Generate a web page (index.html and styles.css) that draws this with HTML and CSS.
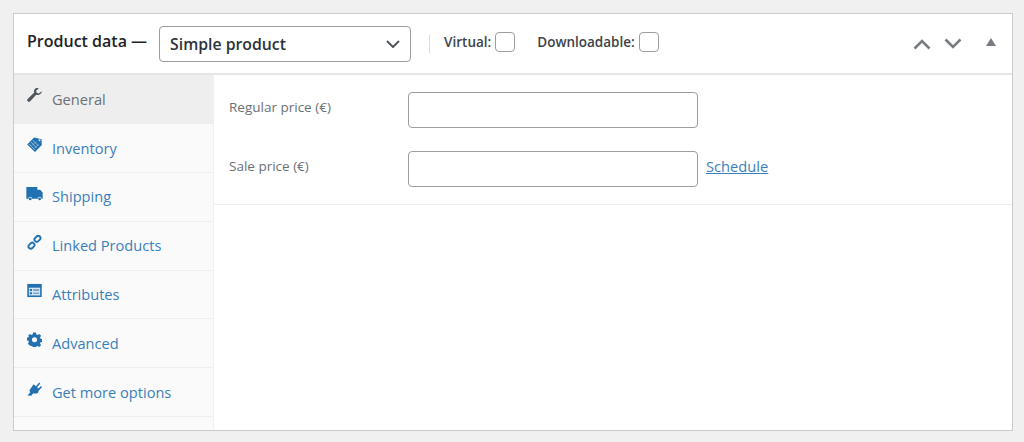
FILE: index.html
```html
<!DOCTYPE html>
<html lang="en">
<head>
<meta charset="utf-8">
<title>Product data</title>
<link rel="stylesheet" href="styles.css">
</head>
<body>
<section class="panel">
  <header class="head">
    <h2 class="title">Product data —</h2>
    <div class="select">
      <span>Simple product</span>
      <svg class="caret" width="14" height="8" viewBox="0 0 14 8"><path d="M1 1l6 6 6-6" fill="none" stroke="#50575e" stroke-width="2"/></svg>
    </div>
    <span class="divider"></span>
    <label class="check">Virtual:<span class="box"></span></label>
    <label class="check check-2">Downloadable:<span class="box"></span></label>
    <div class="actions">
      <svg width="18" height="12" viewBox="0 0 18 12"><path d="M1.500 10.500L9 3l7.500 7.500" fill="none" stroke="#787c82" stroke-width="2.600"/></svg>
      <svg width="18" height="12" viewBox="0 0 18 12"><path d="M1.500 1.500L9 9l7.500-7.500" fill="none" stroke="#787c82" stroke-width="2.600"/></svg>
      <svg class="collapse" width="10" height="8" viewBox="0 0 10 8"><path d="M5 0l5 8H0z" fill="#787c82"/></svg>
    </div>
  </header>
  <div class="body">
    <nav class="tabs">
      <a class="tab active">
        <svg class="ico" viewBox="0 0 16 16"><path d="M15.500 3.500l-2.900 2.300-2.300-.7-.6-2.300L12.500.4C10.600-.3 8.500.3 7.700 2c-.4 1-.4 2 0 2.900L.9 11.400c-.9.900-.9 2-.2 2.800.8.800 1.900.7 2.700-.2L9.800 7.300c1 .4 2.100.3 3.100-.2 1.900-.8 3-2 2.600-3.600z" fill="#50575e"/></svg>
        <span>General</span>
      </a>
      <a class="tab">
        <svg class="ico" viewBox="0 0 16 16"><path d="M7.500 .5L15.500 2.500l.3 6L8.500 16 .2 8z" fill="#2271b1"/><path d="M6.300 3.500l6 6M4.300 5.500l6 6M2.300 7.500l6 6" stroke="#a9c8e0" stroke-width=".9"/><path d="M5.500 9l4-4M8 12l4-4" stroke="#a9c8e0" stroke-width=".7"/><circle cx="13.300" cy="3.400" r="1" fill="#dcebf5"/></svg>
        <span>Inventory</span>
      </a>
      <a class="tab">
        <svg class="ico ico-wide" viewBox="0 0 18 16"><path d="M.300 1h11.700v3h3l2.700 3v6.500h-1.200a2 2 0 0 0-4 0H6.500a2 2 0 0 0-4 0H.300z" fill="#2271b1"/><circle cx="4.500" cy="13.800" r="1.500" fill="#2271b1"/><circle cx="14.500" cy="13.800" r="1.500" fill="#2271b1"/></svg>
        <span>Shipping</span>
      </a>
      <a class="tab">
        <svg class="ico" viewBox="0 0 16 16"><g fill="none" stroke="#2271b1" stroke-width="2"><rect x="7.700" y="1.700" width="7" height="4.800" rx="2.400" transform="rotate(-45 11.200 4.100)"/><rect x="1.300" y="9" width="7" height="4.800" rx="2.400" transform="rotate(-45 4.800 11.400)"/></g></svg>
        <span>Linked Products</span>
      </a>
      <a class="tab">
        <svg class="ico" viewBox="0 0 16 16"><path d="M.300 1h15.400v14H.300z" fill="#2271b1"/><path d="M2 5h12v8.300H2z" fill="#d5e5f1"/><path d="M3 6.300h2.300v2.300H3zM3 9.800h2.300v2.300H3z" fill="#2271b1"/><path d="M6.500 7h6.500v1H6.500zM6.500 10.300h6.500v1H6.500z" fill="#2271b1"/></svg>
        <span>Attributes</span>
      </a>
      <a class="tab">
        <svg class="ico" viewBox="0 0 16 16"><path fill-rule="evenodd" d="M6.500 .5h3l.4 2 1.400.6L13 2l2 2-1.100 1.700.6 1.400 2 .4v3l-2 .4-.6 1.400 1.100 1.700-2 2-1.700-1.100-1.400.6-.4 2h-3l-.4-2-1.400-.6L3 14.400l-2-2 1.100-1.700-.6-1.400-2-.4v-3l2-.4.600-1.400L1 4l2-2 1.700 1.100 1.400-.6zM8 5.500a2.700 2.700 0 1 0 0 5.400 2.700 2.700 0 0 0 0-5.400z" fill="#2271b1"/></svg>
        <span>Advanced</span>
      </a>
      <a class="tab">
        <svg class="ico" viewBox="0 0 16 16"><path d="M.500 15.500l3-3.500L2.500 10 7 3.500l2.500 2L13 1.500l1.200 1.200-3.400 4 1.300 1.200 3-2.500 1 1.300-3.500 3.300-1 2.800-3 .9-2-.7-2 2.700z" fill="#2271b1"/></svg>
        <span>Get more options</span>
      </a>
    </nav>
    <div class="content">
      <div class="fields">
        <div class="field">
          <label class="label">Regular price (€)</label>
          <span class="input"></span>
        </div>
        <div class="field field-2">
          <label class="label">Sale price (€)</label>
          <span class="input"></span>
          <a class="link">Schedule</a>
        </div>
      </div>
    </div>
  </div>
</section>
</body>
</html>
```

FILE: styles.css
```css
* { box-sizing: border-box; }
html, body { height: 100%; }
body {
  margin: 0;
  padding: 13px 11px 11px 13px;
  background: #f0f0f1;
  font-family: "Open Sans", "Noto Sans", sans-serif;
  color: #3c434a;
  overflow: hidden;
}
.panel {
  height: 418px;
  border: 1px solid #c9cccf;
  background: #fff;
  display: flex;
  flex-direction: column;
}
.head {
  height: 61.400px;
  flex: none;
  border-bottom: 2px solid #e5e5e5;
  display: flex;
  align-items: center;
  padding: 0 16px 0 13px;
}
.title {
  margin: 0 12px 5px 0;
  font-size: 16px;
  font-weight: 600;
  color: #1d2327;
  white-space: nowrap;
}
.select {
  width: 252px;
  height: 36px;
  border: 1px solid #9a9da1;
  border-radius: 4px;
  padding: 0 10px;
  display: flex;
  align-items: center;
  justify-content: space-between;
  font-size: 15.800px;
  font-weight: 600;
  color: #2c3338;
}
.divider {
  width: 1px;
  height: 18px;
  background: #dcdcde;
  margin: 0 14px 0 18px;
}
.check {
  display: flex;
  align-items: center;
  gap: 3px;
  font-size: 13.500px;
  font-weight: 600;
  color: #3c434a;
  margin-bottom: 4px;
}
.check-2 { margin-left: 22px; }
.box {
  width: 20px;
  height: 20px;
  border: 1px solid #9a9da1;
  border-radius: 4px;
  margin-left: 1px;
}
.actions {
  margin-left: auto;
  display: flex;
  align-items: center;
  gap: 13px;
}
.collapse { margin-left: 11px; margin-bottom: 3px; }
.body { flex: 1; display: flex; min-height: 0; }
.tabs {
  width: 200px;
  flex: none;
  background: #fafafa;
  border-right: 1px solid #f0f0f0;
  display: flex;
  flex-direction: column;
}
.tab {
  height: 48.800px;
  flex: none;
  display: flex;
  align-items: center;
  padding: 0 0 1px 13px;
  gap: 10px;
  border-bottom: 1px solid #eeeeee;
  font-size: 14.600px;
  color: #3a7fbb;
}
.tab.active { background: #eeeeee; color: #6b7177; border-bottom-color: #eeeeee; }
.ico { width: 15px; height: 15px; flex: none; margin-bottom: 6px; }
.ico-wide { width: 17px; margin-left: -1px; margin-right: -1px; }
.content { flex: 1; min-width: 0; }
.fields {
  height: 130px;
  border-bottom: 1px solid #eeeeee;
  padding-top: 17px;
}
.field { display: flex; align-items: flex-start; padding-left: 15px; }
.field-2 { margin-top: 23px; }
.label {
  width: 179px;
  flex: none;
  font-size: 13.500px;
  line-height: 18px;
  padding-top: 6px;
  color: #6b7177;
}
.input {
  width: 290px;
  height: 36px;
  border: 1px solid #9a9da1;
  border-radius: 4px;
  background: #fff;
}
.link {
  margin-left: 8px;
  font-size: 14.700px;
  line-height: 20px;
  padding-top: 5px;
  color: #3a7fbb;
  text-decoration: underline;
}
```
